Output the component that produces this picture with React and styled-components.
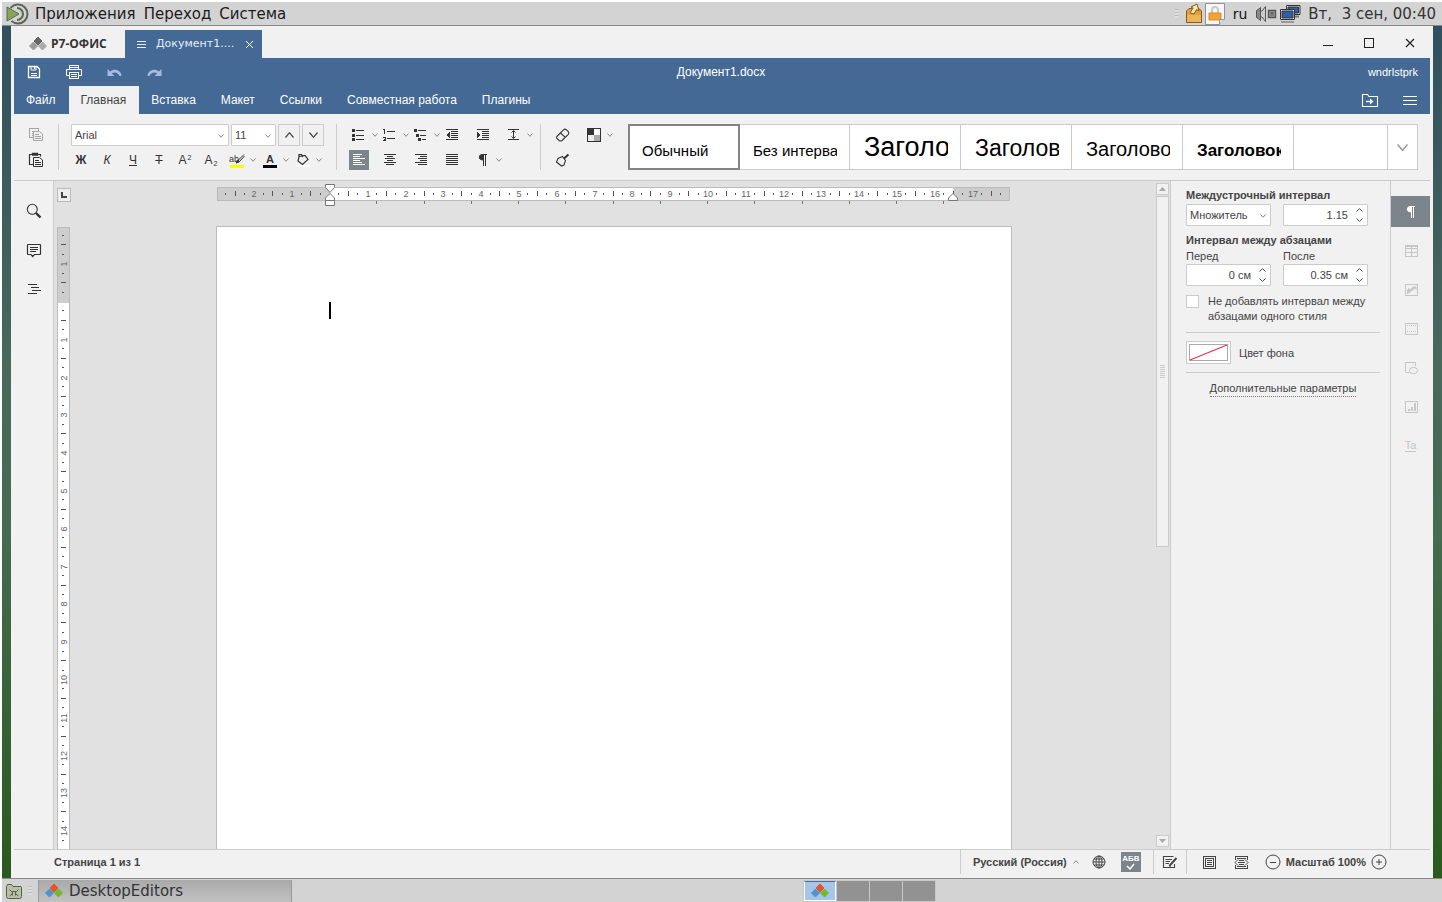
import React from 'react';
import styled, { createGlobalStyle, css } from 'styled-components';

const ui = '"Liberation Sans", Arial, sans-serif';
const desktopFont = '"DejaVu Sans", Verdana, sans-serif';

const GlobalStyle = createGlobalStyle`
  *, *::before, *::after { box-sizing: border-box; }
  body { margin: 0; background: #fff; font-family: ${ui}; font-size: 11px; color: #444; }
  button, input, select { font: inherit; color: inherit; margin: 0; }
  button { border: 0; padding: 0; background: none; }
  svg { display: block; flex: none; }
`;

/* ---------- icons ---------- */

const Svg = ({ w = 20, h = w, children, ...rest }) => (
  <svg width={w} height={h} viewBox={`0 0 ${w} ${h}`} fill="none" stroke="currentColor" aria-hidden="true" {...rest}>
    {children}
  </svg>
);

const crisp = { shapeRendering: 'crispEdges' };

const Chevron = ({ w = 7, h = 4, color = '#888', up, sw = 1 }) => (
  <Svg w={w} h={h} stroke={color} strokeWidth={sw}>
    <path d={up ? `M.5 ${h - 0.5}L${w / 2} .7L${w - 0.5} ${h - 0.5}` : `M.5 .5L${w / 2} ${h - 0.7}L${w - 0.5} .5`} />
  </Svg>
);

const icons = {
  save: (
    <Svg>
      <path d="M4.500 4.500H13L15.500 7V15.500H4.500Z" strokeWidth="1.3" />
      <path d="M7 4.500V8H12V4.500M10.500 5V7" />
      <path d="M7 11.500H13M7 13.500H13" {...crisp} />
    </Svg>
  ),
  print: (
    <Svg>
      <path d="M5.500 8V3.500H14.500V8M5.500 13.500H2.500V7.500H17.500V13.500H14.500" />
      <path d="M5.500 10.500H14.500V16.500H5.500ZM5.500 5.500H14.500M7 12.500H13M7 14.500H13" {...crisp} />
    </Svg>
  ),
  undo: (
    <Svg stroke="none" fill="#a4bbe0">
      <path d="M3.500 7V14H10.500L7.800 11.600C10 9.500 14 10 15.500 14H17.500C17 7.500 10 6 6 9.500Z" />
    </Svg>
  ),
  redo: (
    <Svg stroke="none" fill="#a4bbe0">
      <path d="M17.500 7V14H10.500L13.200 11.600C11 9.500 7 10 5.500 14H3.500C4 7.500 11 6 15 9.500Z" />
    </Svg>
  ),
  copy: (
    <Svg stroke="#a5a5a5">
      <path d="M7 12.500H3.500V3.500H12.500V6.500M5.500 6.500H8M5.500 8.500H7M5.500 10.500H7" {...crisp} />
      <path d="M7.500 6.500H13.500L16.500 9V15.500H7.500ZM9 9.500H13M9 11.500H15M9 13.500H15" />
    </Svg>
  ),
  paste: (
    <Svg>
      <path d="M7 14.500H3.500V4.500H14.500V6.500" strokeWidth="1.2" />
      <path d="M6.500 3.500H11.500V5H6.500Z" strokeWidth="1.400" />
      <path d="M7.500 7.500H13.500L16.500 10V16.500H7.500ZM9 10.500H13M9 12.500H15M9 14.500H15" />
    </Svg>
  ),
  highlight: (
    <Svg>
      <rect x="3" y="15" width="14" height="3" fill="#ffff00" stroke="none" />
      <path d="M17 4.500L11.500 10L9.500 13L12.500 11.500L17.500 6" />
      <path d="M12.500 11.500L10 10.500L9.500 13Z" fill="currentColor" />
    </Svg>
  ),
  fontColor: (
    <Svg {...crisp}><rect x="3" y="15" width="14" height="3" fill="#000" stroke="none" /></Svg>
  ),
  shade: (
    <Svg>
      <rect x="3" y="15" width="14" height="2" fill="#fff" stroke="none" />
      <path d="M6 6.500L12 5.500L15 9.500L9.500 14.500L5 11ZM6 6.500V4.500H8.500L10 7" strokeWidth="1.2" />
    </Svg>
  ),
  bullets: (
    <Svg {...crisp}>
      <path d="M3 4h3v3h-3zM3 8.500h3v3h-3zM3 13h3v3h-3z" fill="currentColor" stroke="none" />
      <path d="M7 5.500H15M7 10.500H15M7 14.500H15" />
    </Svg>
  ),
  numbers: (
    <Svg {...crisp}>
      <path d="M3 4.500H4.500V8.500M3 12.500H5.500V14L3.500 15.500H6" strokeWidth="1" />
      <path d="M7 6.500H15M7 13.500H15" />
    </Svg>
  ),
  multilevel: (
    <Svg {...crisp}>
      <path d="M3 4h3v3h-3zM5 8.500h3v3h-3zM7 13h3v3h-3z" fill="currentColor" stroke="none" />
      <path d="M7 5.500H15M9 10.500H15M11 14.500H15" />
    </Svg>
  ),
  outdent: (
    <Svg {...crisp}>
      <path d="M4 4.500H16M9 6.500H16M9 8.500H16M9 10.500H16M9 12.500H16M4 14.500H16" />
      <path d="M8 7V13L4 10Z" fill="currentColor" stroke="none" />
    </Svg>
  ),
  indent: (
    <Svg {...crisp}>
      <path d="M4 4.500H16M9 6.500H16M9 8.500H16M9 10.500H16M9 12.500H16M4 14.500H16" />
      <path d="M4 7V13L8 10Z" fill="currentColor" stroke="none" />
    </Svg>
  ),
  spacing: (
    <Svg>
      <path d="M4 4.500H15M4 14.500H15" {...crisp} />
      <path d="M9.500 6V13M7.500 7.500L9.500 5.500L11.500 7.500M7.500 11.500L9.500 13.500L11.500 11.500" />
    </Svg>
  ),
  left: <Svg {...crisp}><path d="M4 4.500H13M4 6.500H11M4 8.500H16M4 10.500H11M4 12.500H13M4 14.500H16" /></Svg>,
  center: <Svg {...crisp}><path d="M4 4.500H16M7 6.500H13M5 8.500H15M7 10.500H13M4 12.500H16M6 14.500H14" /></Svg>,
  right: <Svg {...crisp}><path d="M4 4.500H16M9 6.500H16M7 8.500H16M9 10.500H16M4 12.500H16M7 14.500H16" /></Svg>,
  justify: <Svg {...crisp}><path d="M4 4.500H16M4 6.500H16M4 8.500H16M4 10.500H16M4 12.500H16M4 14.500H16" /></Svg>,
  pilcrow: (
    <Svg>
      <path d="M10.500 5V15.500M12.500 5V15.500M8.500 4.500H14" {...crisp} />
      <path d="M10.500 4.500H8.500A2.700 2.700 0 0 0 8.500 9.800H10.500Z" fill="currentColor" />
    </Svg>
  ),
  eraser: (
    <Svg>
      <path d="M3.800 11.500L10.500 4.800Q12 3.500 13.500 4.800L15.300 6.500Q16.500 8 15.300 9.300L9 15.500Q7.500 16.500 6.200 15.500L4 13.500Q3 12.500 3.800 11.500ZM7.500 8L12.300 12.300" strokeWidth="1.100" />
    </Svg>
  ),
  scheme: (
    <Svg {...crisp}>
      <path d="M4 4h6v6h-6z" fill="#333" stroke="none" />
      <path d="M10 4h6v6h-6z" fill="#fff" stroke="none" />
      <path d="M4 10h6v6h-6z" fill="#ececec" stroke="none" />
      <path d="M10 10h6v6h-6z" fill="#aaa" stroke="none" />
      <path d="M3.500 3.500H16.500V16.500H3.500Z" />
    </Svg>
  ),
  brush: (
    <Svg>
      <path d="M9.500 6.500L5 8.500L3.500 12L8.500 16L11 15L12.500 10.500Z" strokeWidth="1.100" />
      <path d="M15.500 4.500L11 8.500" strokeWidth="2" />
    </Svg>
  ),
  search: (
    <Svg>
      <circle cx="8.300" cy="8.300" r="5" strokeWidth="1.100" />
      <path d="M12 12L16.500 16.500" strokeWidth="2.400" />
    </Svg>
  ),
  comment: (
    <Svg>
      <path d="M4 4.500H16Q16.500 4.500 16.500 5V14Q16.500 14.500 16 14.500H10.500L8.700 16.500L7 14.500H4Q3.500 14.500 3.500 14V5Q3.500 4.500 4 4.500Z" strokeWidth="1.200" />
      <path d="M6 7.500H14M6 9.500H14M6 11.500H12" {...crisp} />
    </Svg>
  ),
  outline: <Svg {...crisp}><path d="M4 5.500H13M7 8.500H15M8 11.500H17M4 14.500H13" /></Svg>,
  folder: (
    <Svg>
      <path d="M2.500 4.500H7.500L9 6.500H17.500V16.500H2.500Z" strokeWidth="1.100" />
      <path d="M6 11.500H11" strokeWidth="1.500" />
      <path d="M10 8.500L13.500 11.500L10 14.500Z" fill="currentColor" stroke="none" />
    </Svg>
  ),
  menu: <Svg {...crisp}><path d="M3 6.500H17M3 10.500H17M3 14.500H17" /></Svg>,
  table: (
    <Svg {...crisp}><path d="M4.500 4.500H16.500V15.500H4.500ZM4.500 7.500H16.500M4.500 11.500H16.500M10.500 4.500V15.500M5 5.500H16" /></Svg>
  ),
  image: (
    <Svg>
      <path d="M4.500 4.500H16.500V15.500H4.500Z" {...crisp} />
      <path d="M6 14.500V10L8 8L9.500 9.500L12 6.500H15.500V10L14 8.500Z" fill="currentColor" stroke="none" />
    </Svg>
  ),
  headerFooter: (
    <Svg {...crisp}>
      <path d="M4.500 4.500H16.500V15.500H4.500Z" />
      <path d="M6 6.500H16M6 12.500H16" strokeDasharray="1 1" />
    </Svg>
  ),
  shape: (
    <Svg>
      <path d="M8 14.500H4.500V4.500H14.500V8" />
      <ellipse cx="12.500" cy="12.500" rx="4" ry="3.200" />
    </Svg>
  ),
  chart: (
    <Svg {...crisp}>
      <path d="M4.500 4.500H16.500V15.500H4.500Z" />
      <path d="M7 12h2v2h-2zM10 10h2v4h-2zM13 6h2v8h-2z" fill="currentColor" stroke="none" />
    </Svg>
  ),
  globe: (
    <Svg>
      <circle cx="10" cy="10" r="6" />
      <ellipse cx="10" cy="10" rx="3" ry="6" />
      <path d="M10 4V16M4 10H16M5 7H15M5 13H15" />
    </Svg>
  ),
  track: (
    <Svg>
      <path d="M13.500 4.500H3.500V15.500H14.500V12M5.500 7.500H12M5.500 9.500H10M5.500 11.500H9" strokeWidth="1.100" />
      <path d="M16.500 6L10.500 12.500L9.500 14.500" strokeWidth="2" />
    </Svg>
  ),
  fitPage: (
    <Svg {...crisp}><path d="M4.500 4.500H16.500V16.500H4.500ZM6.500 6.500H14.500V14.500H6.500ZM8 8.500H13M8 10.500H13M8 12.500H13" /></Svg>
  ),
  fitWidth: (
    <Svg>
      <path d="M4.500 8V4.500H16.500V8M4.500 13V16.500H16.500V13M6.500 7V6.500H14.500V7M6.500 14V14.500H14.500V14M8 8.500H13M7 10.500H14M8 12.500H13" {...crisp} />
      <path d="M7 7.500L4 10.500L7 13.500M14 7.500L17 10.500L14 13.500" />
    </Svg>
  ),
  minus: <Svg><circle cx="10" cy="10" r="7" /><path d="M7 10.500H13" {...crisp} /></Svg>,
  plus: <Svg><circle cx="10" cy="10" r="7" /><path d="M7 10H13M10 7V13" /></Svg>,
};

const ThreeDiamonds = ({ colors }) => (
  <Svg w={18} h={14} stroke="none">
    <path d="M9 0L13 4L9 8L5 4Z" fill={colors[0]} stroke={colors[0]} strokeLinejoin="round" />
    <path d="M4.500 5L8.500 9L4.500 13L.500 9Z" fill={colors[1]} stroke={colors[1]} strokeLinejoin="round" />
    <path d="M13.500 5L17.500 9L13.500 13L9.500 9Z" fill={colors[2]} stroke={colors[2]} strokeLinejoin="round" />
  </Svg>
);
const brand = ['#e2562b', '#4d93cf', '#73ba2a'];

/* ---------- desktop ---------- */

const Desktop = styled.div`
  height: 100vh;
  min-height: 500px;
  display: flex;
  flex-direction: column;
  padding: 2px 0 0 2px;
`;

const Panel = styled.header`
  flex: none;
  height: 24px;
  display: flex;
  align-items: center;
  background: #d3d3d3;
  font: 15px/20px ${desktopFont};
  color: #1c1c1c;
  border-bottom: ${p => (p.$bottom ? 0 : '1px solid #888')};
  border-top: ${p => (p.$bottom ? '1px solid #888' : 0)};
  padding: 0 4px;
`;

const PanelMenu = styled.nav`
  display: flex;
  gap: 8px;
  margin-left: 6px;
  flex: 1;
`;
const PanelItem = styled.button`
  line-height: 20px;
`;
const Tray = styled.div`
  display: flex;
  align-items: center;
  gap: 2px;
`;
const Lang = styled.span`
  font-size: 14px;
  margin: 0 6px;
  color: #111;
`;
const Clock = styled.time`
  color: #333;
  margin-left: 5px;
  padding-right: 2px;
  white-space: pre;
`;
const Grip = styled.span`
  width: 4px;
  height: 9px;
  margin: 0 ${p => (p.$wide ? 6 : 4)}px;
  background: repeating-linear-gradient(#bbb 0 1px, #ddd 1px 3px);
`;
const TaskButton = styled.button`
  display: flex;
  align-items: center;
  gap: 6px;
  width: 254px;
  height: 22px;
  padding: 0 6px;
  background: linear-gradient(#a9a9a9, #c2c2c2);
  border-right: 1px solid #999;
  border-left: 1px solid #999;
  color: #333;
`;
const Workspaces = styled.div`
  display: flex;
  gap: 1px;
  margin-left: 511px;
  padding: 1px;
  background: #c8c8c8;
`;
const Workspace = styled.button`
  width: 32px;
  height: 20px;
  display: flex;
  align-items: center;
  justify-content: center;
  background: ${p => (p.$on ? '#a6c5ea' : '#929292')};
  border: ${p => (p.$on ? '1px solid #fff' : 0)};
  border-top-color: #4a6d95;
`;

const Wallpaper = styled.div`
  flex: 1;
  min-height: 0;
  padding: 0 9px;
  background: linear-gradient(#31505f, #48695c 40%, #456b50 60%, #2a5a1e);
  display: flex;
`;

/* ---------- window ---------- */

const Window = styled.main`
  flex: 1;
  min-width: 0;
  display: flex;
  flex-direction: column;
  background: #f1f1f1;
  padding: 0 3px;
`;
const TitleBar = styled.div`
  flex: none;
  height: 32px;
  display: flex;
  align-items: flex-end;
`;
const Logo = styled.div`
  width: 111px;
  height: 28px;
  padding-left: 15px;
  display: flex;
  align-items: center;
  gap: 4px;
  font: bold 12px/28px "Open Sans", sans-serif;
  color: #333;
`;
const DocTab = styled.div`
  width: 137px;
  height: 28px;
  padding: 0 8px 0 12px;
  display: flex;
  align-items: center;
  background: #446995;
  color: #e4edf8;
  font: 11px/28px ${desktopFont};
`;
const DocName = styled.span`
  flex: 1;
  margin-left: 10px;
`;
const WindowControls = styled.div`
  flex: 1;
  height: 28px;
  display: flex;
  justify-content: flex-end;
  align-items: center;
  gap: 25px;
  padding-right: 12px;
  color: #222;
`;

const Header = styled.div`
  flex: none;
  background: #446995;
  color: #fff;
`;
const QuickRow = styled.div`
  height: 28px;
  display: grid;
  grid-template-columns: 1fr auto 1fr;
  align-items: center;
  padding: 0 12px 0 10px;
  font-size: 12px;
`;
const QuickButtons = styled.div`
  display: flex;
  gap: 20px;
`;
const UserName = styled.span`
  justify-self: end;
  font-size: 11px;
`;
const TabRow = styled.div`
  height: 28px;
  display: flex;
  align-items: center;
`;
const Tab = styled.button`
  height: 28px;
  padding: 0 13px 0 12px;
  font-size: 12px;
  color: ${p => (p.$on ? '#444' : '#fff')};
  background: ${p => (p.$on ? '#f1f1f1' : 'transparent')};
`;
const TabTools = styled.div`
  margin-left: auto;
  display: flex;
  gap: 20px;
  padding-right: 10px;
`;

/* ---------- toolbar ---------- */

const Toolbar = styled.div`
  flex: none;
  height: 67px;
  display: flex;
  padding: 10px 12px 0;
  border-bottom: 1px solid #cbcbcb;
`;
const Group = styled.div`
  display: flex;
  flex-direction: column;
  gap: 4px;
`;
const Row = styled.div`
  height: ${p => (p.$tall ? 22 : 20)}px;
  display: flex;
  align-items: center;
  gap: ${p => p.$gap || 0}px;
`;
const Separator = styled.div`
  width: 1px;
  height: 46px;
  margin: 0 ${p => p.$right || 12}px 0 ${p => p.$left || 12}px;
  background: #cbcbcb;
`;
const Slot = styled.div`
  width: 31px;
  display: flex;
  align-items: center;
`;
const Tool = styled.button`
  position: relative;
  width: 20px;
  height: 20px;
  flex: none;
  display: flex;
  align-items: center;
  justify-content: center;
  font: 12px/20px ${ui};
  color: ${p => (p.$on ? '#fff' : '#333')};
  background: ${p => (p.$on ? '#7d858c' : 'transparent')};
  ${p => p.$bold && css`font-weight: bold;`}
  ${p => p.$italic && css`font-style: italic;`}
  ${p => p.$deco && css`text-decoration: ${p.$deco};`}
`;
const Script = styled.span`
  font-size: 7px;
  line-height: 7px;
  align-self: ${p => (p.$low ? 'flex-end' : 'flex-start')};
  padding: 4px 0 3px 1px;
`;
const Overlay = styled.span`
  position: absolute;
  left: 0;
  right: ${p => (p.$shift ? 6 : 0)}px;
  top: 2px;
  text-align: center;
  font: ${p => (p.$shift ? 9 : 11)}px/14px ${ui};
  font-weight: ${p => (p.$shift ? 'normal' : 'bold')};
`;
const DropArrow = styled.button`
  width: 12px;
  height: 20px;
  flex: none;
  display: flex;
  align-items: center;
  justify-content: center;
`;
const Field = styled.div`
  position: relative;
  width: ${p => p.$w}px;
  height: 22px;
  display: flex;
  align-items: center;
  border: 1px solid #cbcbcb;
  border-radius: 1px;
  background: #fff;
  > svg { position: absolute; right: 4px; top: 9px; pointer-events: none; }
`;
const Select = styled.select`
  appearance: none;
  border: 0;
  outline: 0;
  background: none;
  width: 100%;
  height: 20px;
  padding: 0 3px;
`;
const BoxButton = styled.button`
  width: 22px;
  height: 22px;
  border: 1px solid #cbcbcb;
  display: flex;
  align-items: center;
  justify-content: center;
`;
const Gallery = styled.div`
  flex: 1;
  min-width: 0;
  height: 46px;
  margin-left: 13px;
  display: flex;
  background: #fff;
  border: 1px solid #cbcbcb;
`;
const GalleryItem = styled.button`
  width: ${p => (p.$on ? 110 : 111)}px;
  height: 44px;
  flex: none;
  padding: ${p => p.$top}px 12px 0 ${p => (p.$on ? 13 : 14)}px;
  display: flex;
  align-items: flex-start;
  text-align: left;
  color: #000;
  font-size: ${p => p.$size}px;
  font-weight: ${p => (p.$bold ? 'bold' : 'normal')};
  border-right: 1px solid #cbcbcb;
  ${p => p.$on && css`
    outline: 2px solid #848484;
    outline-offset: -1px;
    border-color: transparent;
  `}
`;
const Clip = styled.span`
  flex: 1;
  min-width: 0;
  overflow: hidden;
  white-space: nowrap;
  line-height: 30px;
`;
const GalleryMore = styled.button`
  width: 30px;
  margin-left: auto;
  border-left: 1px solid #cbcbcb;
  display: flex;
  align-items: center;
  justify-content: center;
`;

/* ---------- body ---------- */

const Body = styled.div`
  flex: 1;
  min-height: 0;
  display: flex;
`;
const SideBar = styled.div`
  width: 40px;
  flex: none;
  display: flex;
  flex-direction: column;
  align-items: center;
  gap: 19px;
  padding-top: 20px;
  border-right: 1px solid #cbcbcb;
  color: #333;
`;
const Canvas = styled.div`
  flex: 1;
  min-width: 0;
  display: flex;
  background: #e1e1e1;
  overflow: hidden;
`;
const VRulerColumn = styled.div`
  width: 17px;
  flex: none;
  padding: 7px 0 0 3px;
  display: flex;
  flex-direction: column;
  gap: 25px;
  overflow: hidden;
`;
const TabStop = styled.button`
  width: 14px;
  height: 14px;
  flex: none;
  border: 1px solid #bbb;
  background: #ececec;
  display: flex;
  align-items: center;
  justify-content: center;
`;
const Document = styled.div`
  flex: 1;
  min-width: 0;
  display: flex;
  flex-direction: column;
  align-items: center;
  overflow: hidden;
`;
const HRulerRow = styled.div`
  height: 45px;
  flex: none;
`;
const Page = styled.div`
  width: 796px;
  flex: 1;
  background: #fff;
  border: 1px solid #bbb;
  border-bottom: 0;
  padding: 75px 112px;
`;
const Caret = styled.div`
  width: 2px;
  height: 17px;
  background: #000;
`;
const ScrollBar = styled.div`
  width: 14px;
  flex: none;
  padding: 2px 1px 2px 0;
  display: flex;
  flex-direction: column;
`;
const ScrollButton = styled.button`
  width: 13px;
  height: 12px;
  flex: none;
  border: 1px solid #cbcbcb;
  background: #f1f1f1;
  display: flex;
  align-items: center;
  justify-content: center;
`;
const ScrollTrack = styled.div`
  flex: 1;
  padding-top: 1px;
`;
const ScrollThumb = styled.div`
  height: 55%;
  border: 1px solid #cbcbcb;
  background: #f1f1f1;
  display: flex;
  align-items: center;
  justify-content: center;
  &::before {
    content: '';
    width: 5px;
    height: 13px;
    background: repeating-linear-gradient(#cbcbcb 0 1px, transparent 1px 2px);
  }
`;

const Settings = styled.form`
  width: 220px;
  flex: none;
  padding: 8px 10px 0 15px;
  border-left: 1px solid #cbcbcb;
`;
const Title = styled.div`
  font-weight: bold;
  line-height: 13px;
  margin-bottom: ${p => p.$gap || 0}px;
`;
const Pair = styled.div`
  display: grid;
  grid-template-columns: 85px 85px;
  column-gap: 12px;
  margin-bottom: 8px;
`;
const Label = styled.label`
  display: block;
  line-height: 13px;
  margin-bottom: 1px;
`;
const NumberInput = styled.input`
  border: 0;
  outline: 0;
  background: none;
  width: 100%;
  height: 20px;
  padding: 0 19px 0 0;
  text-align: right;
`;
const Spinner = styled.span`
  position: absolute;
  right: 4px;
  top: 2px;
  height: 16px;
  display: flex;
  flex-direction: column;
  justify-content: space-between;
  button { height: 6px; display: flex; align-items: center; }
`;
const CheckLabel = styled.label`
  display: flex;
  gap: 9px;
  line-height: 15px;
`;
const CheckBox = styled.input`
  appearance: none;
  width: 13px;
  height: 13px;
  flex: none;
  margin: 1px 0 0;
  border: 1px solid #cbcbcb;
  background: #fff;
`;
const Rule = styled.hr`
  border: 0;
  height: 1px;
  background: #cbcbcb;
  margin: 8px 0;
`;
const ColorRow = styled.div`
  display: flex;
  align-items: center;
  gap: 8px;
`;
const Swatch = styled.button`
  width: 45px;
  height: 23px;
  padding: 2px;
  border: 1px solid #cbcbcb;
  background: #fff;
`;
const Advanced = styled.div`
  text-align: center;
  a {
    color: inherit;
    text-decoration: none;
    line-height: 15px;
    display: inline-block;
    border-bottom: 1px dotted #777;
  }
`;
const RightTabs = styled.div`
  width: 40px;
  flex: none;
  padding-top: 15px;
  border-left: 1px solid #cbcbcb;
  display: flex;
  flex-direction: column;
  gap: 8px;
`;
const RightTab = styled.button`
  height: 31px;
  display: flex;
  align-items: center;
  justify-content: center;
  font-size: 11px;
  color: ${p => (p.$on ? '#fff' : '#c6c6c6')};
  background: ${p => (p.$on ? '#7d858c' : 'transparent')};
`;
const TextArt = styled.span`
  border-bottom: 1px solid #c6c6c6;
  line-height: 12px;
`;

const StatusBar = styled.footer`
  flex: none;
  height: 29px;
  border-top: 1px solid #cbcbcb;
  display: flex;
  align-items: center;
  padding: 0 41px 4px 40px;
  font-weight: bold;
`;
const PageCount = styled.span`
  flex: 1;
`;
const StatusSep = styled.span`
  width: 1px;
  height: 24px;
  background: #cbcbcb;
`;
const StatusGroup = styled.div`
  display: flex;
  align-items: center;
  gap: ${p => p.$gap || 0}px;
  padding: 0 ${p => p.$x}px;
`;
const LangButton = styled.button`
  display: flex;
  align-items: center;
  gap: 6px;
  font-weight: bold;
`;
const Spell = styled.button`
  width: 20px;
  height: 20px;
  background: #7d858c;
  color: #fff;
  font: bold 8px/9px ${ui};
  display: flex;
  flex-direction: column;
  align-items: center;
  padding-top: 2px;
`;

/* ---------- rulers ---------- */

const CM = 37.8;

const HRuler = () => {
  const zero = 113;
  const marks = [];
  for (let q = -11; q <= 71; q++) {
    const x = Math.round(zero + (q * CM) / 4);
    if (q === 0 || x > 788) continue;
    if (q % 4 === 0) {
      marks.push(<text key={q} x={x} y="16" textAnchor="middle" fontSize="9" fill="#666" stroke="none">{Math.abs(q / 4)}</text>);
    } else if (q % 2 === 0) marks.push(<path key={q} d={`M${x - 1}.5 10V15`} stroke="#555" />);
    else marks.push(<path key={q} d={`M${x - 1}.5 12V14`} stroke="#555" />);
  }
  const stops = Array.from({ length: 13 }, (_, i) => Math.round(zero + (i + 1) * CM * 1.25));
  return (
    <Svg w={794} h={30}>
      <rect x="0.5" y="6.500" width="792" height="13" fill="#cdcdcd" stroke="#bbb" {...crisp} />
      <rect x="113" y="7" width="623" height="12" fill="#fff" stroke="none" />
      <g {...crisp}>{marks}</g>
      <g {...crisp} stroke="#777">{stops.map(x => <path key={x} d={`M${x - 1}.5 20V23`} />)}</g>
      <g fill="#fff" stroke="#777">
        <path d="M108.500 3.500H117.500V6.500L113 11.500L108.500 6.500Z" />
        <path d="M113 12.500L117.500 17V19.500H108.500V17ZM108.500 19.500H117.500V24.500H108.500Z" />
        <path d="M736 12.500L740.500 17V19.500H731.500V17Z" />
      </g>
    </Svg>
  );
};

const VRuler = () => {
  const zero = 75;
  const marks = [];
  for (let q = -7; q <= 100; q++) {
    const y = Math.round(zero + (q * CM) / 4) - 1;
    if (q === 0) continue;
    if (q % 4 === 0) {
      marks.push(<text key={q} transform={`translate(10 ${y + 1}) rotate(-90)`} textAnchor="middle" fontSize="9" fill="#666" stroke="none">{Math.abs(q / 4)}</text>);
    } else if (q % 2 === 0) marks.push(<path key={q} d={`M4 ${y}.5H9`} stroke="#555" />);
    else marks.push(<path key={q} d={`M5 ${y}.5H7`} stroke="#555" />);
  }
  return (
    <Svg w={13} h={1024}>
      <rect x="0.5" y="0.5" width="12" height="1030" fill="#fff" stroke="#bbb" {...crisp} />
      <rect x="1" y="1" width="11" height="75" fill="#cdcdcd" stroke="none" />
      <g {...crisp}>{marks}</g>
    </Svg>
  );
};

/* ---------- parts ---------- */

const SplitTool = ({ icon, label, children, arrow = true }) => (
  <Slot>
    <Tool type="button" aria-label={label}>{icons[icon]}{children}</Tool>
    {arrow && <DropArrow type="button" aria-label={`${label}: параметры`}><Chevron w={6} /></DropArrow>}
  </Slot>
);

const NumberField = ({ id, value, label }) => (
  <Field $w={85}>
    <NumberInput id={id} type="text" defaultValue={value} aria-label={label} />
    <Spinner>
      <button type="button" aria-label="Больше"><Chevron up color="#444" /></button>
      <button type="button" aria-label="Меньше"><Chevron color="#444" /></button>
    </Spinner>
  </Field>
);

const styles = [
  { name: 'Обычный', size: 15, top: 11, on: true },
  { name: 'Без интервала', size: 15, top: 11 },
  { name: 'Заголовок 1', size: 27, top: 7 },
  { name: 'Заголовок 2', size: 23, top: 8 },
  { name: 'Заголовок 3', size: 20, top: 9 },
  { name: 'Заголовок 4', size: 17, top: 11, bold: true },
];

const tabs = ['Файл', 'Главная', 'Вставка', 'Макет', 'Ссылки', 'Совместная работа', 'Плагины'];

export default function App() {
  return (
    <Desktop>
      <GlobalStyle />
      <Panel>
        <Svg w={23} h={22} stroke="none">
          <circle cx="12" cy="11" r="9.500" stroke="#5a6650" strokeWidth="2" strokeDasharray="46 14" strokeDashoffset="-36" />
          <path d="M11 5A6 6 0 1 1 11 17" stroke="#5a6650" strokeWidth="2" />
          <path d="M1 4L13 11L1 18Z" fill="#87a556" stroke="#5a6650" />
        </Svg>
        <PanelMenu>
          <PanelItem>Приложения</PanelItem>
          <PanelItem>Переход</PanelItem>
          <PanelItem>Система</PanelItem>
        </PanelMenu>
        <Tray>
          <Grip />
          <Svg w={18} h={22} stroke="#8a5a12">
            <path d="M1.500 8L4 5.500H14L16.500 8V19.500H1.500Z" fill="#e0a040" />
            <path d="M2 12H16V19H2Z" fill="#eeb45a" stroke="none" />
            <path d="M5 10L8 5L6 4L12 1L14 8L11.500 6.500L9 11Z" fill="#f6e7b0" />
          </Svg>
          <Svg w={20} h={22} stroke="#8a93a8">
            <path d="M.500 .500H19.500V16L14.500 21.500H.500Z" fill="#f6f6f6" />
            <path d="M7 10V7A3 3 0 0 1 13 7V10" stroke="#c9c9c9" strokeWidth="2" />
            <path d="M4 10H16V17H4Z" fill="#f0a438" stroke="#dd8b1c" />
            <path d="M14.500 21.500V16.500H19.500" fill="#ddd" />
          </Svg>
          <Lang>ru</Lang>
          <Svg w={22} h={20} stroke="#555">
            <path d="M1.500 6.500Q4 5 5.500 3.500V16.500Q4 15 1.500 13.500Z" fill="#888" />
            <path d="M5.500 7H7L10.500 2.500V17.500L7 13H5.500Z" fill="#ccc" />
            <path d="M13.500 6.500H20.500V13.500H13.500ZM15.500 8.500L18.500 11.500M18.500 8.500L15.500 11.500" fill="#999" strokeWidth="1.400" />
          </Svg>
          <Svg w={22} h={20} stroke="#333">
            <path d="M7.500 1.500H21V10.500H7.500Z" fill="#e8e8e8" />
            <path d="M9 3H19.500V9H9Z" fill="#2b5da8" />
            <path d="M13 12.500H20" stroke="#777" strokeWidth="2" />
            <path d="M1.500 5.500H15.500V15.500H1.500Z" fill="#e8e8e8" />
            <path d="M3 7H14V14H3Z" fill="#2b5da8" />
            <path d="M2 18H15" stroke="#999" strokeWidth="2" />
          </Svg>
          <Clock>Вт,  3 сен, 00:40</Clock>
        </Tray>
      </Panel>

      <Wallpaper>
        <Window>
          <TitleBar>
            <Logo>
              <ThreeDiamonds colors={['#666', '#999', '#aaa']} />
              Р7-ОФИС
            </Logo>
            <DocTab>
              <Svg w={9} h={9} {...crisp}><path d="M0 1.500H9M0 4.500H9M0 7.500H9" /></Svg>
              <DocName>Документ1....</DocName>
              <button type="button" aria-label="Закрыть вкладку">
                <Svg w={9} stroke="#fff"><path d="M1 1L8 8M8 1L1 8" /></Svg>
              </button>
            </DocTab>
            <WindowControls>
              <button type="button" aria-label="Свернуть"><Svg w={16} {...crisp}><path d="M3 9.500H13" /></Svg></button>
              <button type="button" aria-label="Развернуть"><Svg w={16} {...crisp}><path d="M3.500 2.500H12.500V11.500H3.500Z" /></Svg></button>
              <button type="button" aria-label="Закрыть"><Svg w={16}><path d="M4 3L12 11M12 3L4 11" strokeWidth="1.200" /></Svg></button>
            </WindowControls>
          </TitleBar>

          <Header>
            <QuickRow>
              <QuickButtons>
                <button type="button" aria-label="Сохранить">{icons.save}</button>
                <button type="button" aria-label="Печать">{icons.print}</button>
                <button type="button" aria-label="Отменить">{icons.undo}</button>
                <button type="button" aria-label="Повторить">{icons.redo}</button>
              </QuickButtons>
              <span>Документ1.docx</span>
              <UserName>wndrlstprk</UserName>
            </QuickRow>
            <TabRow>
              {tabs.map((t, i) => <Tab key={t} type="button" $on={i === 1}>{t}</Tab>)}
              <TabTools>
                <button type="button" aria-label="Открыть расположение">{icons.folder}</button>
                <button type="button" aria-label="Меню">{icons.menu}</button>
              </TabTools>
            </TabRow>
          </Header>

          <Toolbar>
            <Group>
              <Row $tall><Tool type="button" aria-label="Копировать">{icons.copy}</Tool></Row>
              <Row><Tool type="button" aria-label="Вставить">{icons.paste}</Tool></Row>
            </Group>
            <Separator />
            <Group>
              <Row $tall $gap={2}>
                <Field $w={158}>
                  <Select aria-label="Шрифт" defaultValue="Arial"><option>Arial</option></Select>
                  <Chevron w={6} />
                </Field>
                <Field $w={45}>
                  <Select aria-label="Размер шрифта" defaultValue="11"><option>11</option></Select>
                  <Chevron w={6} />
                </Field>
                <BoxButton type="button" aria-label="Увеличить размер"><Chevron up w={9} h={6} color="#444" sw={1.2} /></BoxButton>
                <BoxButton type="button" aria-label="Уменьшить размер"><Chevron w={9} h={6} color="#444" sw={1.2} /></BoxButton>
              </Row>
              <Row $gap={6}>
                <Tool type="button" $bold>Ж</Tool>
                <Tool type="button" $italic>К</Tool>
                <Tool type="button" $deco="underline">Ч</Tool>
                <Tool type="button" $deco="line-through">Т</Tool>
                <Tool type="button">A<Script>2</Script></Tool>
                <Tool type="button">A<Script $low>2</Script></Tool>
                <Row $gap={2}>
                  <SplitTool icon="highlight" label="Цвет выделения"><Overlay $shift>ab</Overlay></SplitTool>
                  <SplitTool icon="fontColor" label="Цвет шрифта"><Overlay>A</Overlay></SplitTool>
                  <SplitTool icon="shade" label="Заливка абзаца" />
                </Row>
              </Row>
            </Group>
            <Separator />
            <Group>
              <Row $tall>
                <SplitTool icon="bullets" label="Маркеры" />
                <SplitTool icon="numbers" label="Нумерация" />
                <SplitTool icon="multilevel" label="Многоуровневый список" />
                <SplitTool icon="outdent" label="Уменьшить отступ" arrow={false} />
                <SplitTool icon="indent" label="Увеличить отступ" arrow={false} />
                <SplitTool icon="spacing" label="Междустрочный интервал" />
              </Row>
              <Row>
                <Slot><Tool type="button" $on aria-label="По левому краю">{icons.left}</Tool></Slot>
                <SplitTool icon="center" label="По центру" arrow={false} />
                <SplitTool icon="right" label="По правому краю" arrow={false} />
                <SplitTool icon="justify" label="По ширине" arrow={false} />
                <SplitTool icon="pilcrow" label="Непечатаемые символы" />
              </Row>
            </Group>
            <Separator $left={5} />
            <Group>
              <Row $tall>
                <SplitTool icon="eraser" label="Очистить стиль" arrow={false} />
                <SplitTool icon="scheme" label="Цветовая схема" />
              </Row>
              <Row><SplitTool icon="brush" label="Копировать стиль" arrow={false} /></Row>
            </Group>
            <Gallery>
              {styles.map(s => (
                <GalleryItem key={s.name} type="button" $size={s.size} $top={s.top} $bold={s.bold} $on={s.on}>
                  <Clip>{s.name}</Clip>
                </GalleryItem>
              ))}
              <GalleryMore type="button" aria-label="Все стили"><Chevron w={11} h={7} color="#999" sw={1.5} /></GalleryMore>
            </Gallery>
          </Toolbar>

          <Body>
            <SideBar>
              <button type="button" aria-label="Поиск">{icons.search}</button>
              <button type="button" aria-label="Комментарии">{icons.comment}</button>
              <button type="button" aria-label="Навигация">{icons.outline}</button>
            </SideBar>
            <Canvas>
              <VRulerColumn>
                <TabStop type="button" aria-label="Табуляция">
                  <Svg w={6} {...crisp} strokeWidth="2"><path d="M1 0V5H6" /></Svg>
                </TabStop>
                <VRuler />
              </VRulerColumn>
              <Document>
                <HRulerRow><HRuler /></HRulerRow>
                <Page><Caret /></Page>
              </Document>
              <ScrollBar>
                <ScrollButton type="button" aria-label="Вверх"><Svg w={7} h={4} stroke="none"><path d="M0 4L3.500 0L7 4Z" fill="#aaa" /></Svg></ScrollButton>
                <ScrollTrack><ScrollThumb /></ScrollTrack>
                <ScrollButton type="button" aria-label="Вниз"><Svg w={7} h={4} stroke="none"><path d="M0 0L3.500 4L7 0Z" fill="#aaa" /></Svg></ScrollButton>
              </ScrollBar>
            </Canvas>
            <Settings>
              <Title $gap={2}>Междустрочный интервал</Title>
              <Pair>
                <Field $w={85}>
                  <Select aria-label="Тип интервала" defaultValue="Множитель"><option>Множитель</option></Select>
                  <Chevron w={6} />
                </Field>
                <NumberField id="line" value="1.15" label="Значение интервала" />
              </Pair>
              <Title $gap={3}>Интервал между абзацами</Title>
              <Pair>
                <Label htmlFor="before">Перед</Label>
                <Label htmlFor="after">После</Label>
                <NumberField id="before" value="0 см" />
                <NumberField id="after" value="0.35 см" />
              </Pair>
              <CheckLabel>
                <CheckBox type="checkbox" />
                <span>Не добавлять интервал между абзацами одного стиля</span>
              </CheckLabel>
              <Rule />
              <ColorRow>
                <Swatch type="button" id="fill" aria-label="Цвет фона">
                  <Svg w={39} h={17}>
                    <path d="M.500 .500H38.500V16.500H.500Z" stroke="#aaa" {...crisp} />
                    <path d="M1 16L38 1" stroke="#e0334f" strokeWidth="1.200" />
                  </Svg>
                </Swatch>
                <label htmlFor="fill">Цвет фона</label>
              </ColorRow>
              <Rule />
              <Advanced><a href="#advanced">Дополнительные параметры</a></Advanced>
            </Settings>
            <RightTabs>
              <RightTab type="button" $on aria-label="Параметры абзаца">{icons.pilcrow}</RightTab>
              <RightTab type="button" aria-label="Параметры таблицы">{icons.table}</RightTab>
              <RightTab type="button" aria-label="Параметры изображения">{icons.image}</RightTab>
              <RightTab type="button" aria-label="Параметры колонтитулов">{icons.headerFooter}</RightTab>
              <RightTab type="button" aria-label="Параметры фигуры">{icons.shape}</RightTab>
              <RightTab type="button" aria-label="Параметры диаграммы">{icons.chart}</RightTab>
              <RightTab type="button"><TextArt>Ta</TextArt></RightTab>
            </RightTabs>
          </Body>

          <StatusBar>
            <PageCount>Страница 1 из 1</PageCount>
            <StatusSep />
            <StatusGroup $gap={10} $x={12}>
              <LangButton type="button">Русский (Россия)<Chevron up w={6} /></LangButton>
              <StatusGroup $gap={12} $x={0}>
                <button type="button" aria-label="Язык документа">{icons.globe}</button>
                <Spell type="button" aria-label="Проверка орфографии">
                  АБВ
                  <Svg w={9} h={7} strokeWidth="1.500"><path d="M1 3L4 6L8 1" /></Svg>
                </Spell>
              </StatusGroup>
            </StatusGroup>
            <StatusSep />
            <StatusGroup $x={6}>
              <button type="button" aria-label="Отслеживание изменений">{icons.track}</button>
            </StatusGroup>
            <StatusSep />
            <StatusGroup $gap={12} $x={12}>
              <button type="button" aria-label="По размеру страницы">{icons.fitPage}</button>
              <button type="button" aria-label="По ширине страницы">{icons.fitWidth}</button>
            </StatusGroup>
            <StatusGroup $gap={3} $x={0}>
              <button type="button" aria-label="Уменьшить масштаб">{icons.minus}</button>
              <span>Масштаб 100%</span>
              <button type="button" aria-label="Увеличить масштаб">{icons.plus}</button>
            </StatusGroup>
          </StatusBar>
        </Window>
      </Wallpaper>

      <Panel as="footer" $bottom>
        <Svg w={16} h={16} stroke="#55604a">
          <path d="M.500 3.500V13.500Q.500 15.500 2.500 15.500H13.500Q15.500 15.500 15.500 13.500V4.500Q15.500 3.500 14 3.500H7L5.500 1.500H1.500Z" fill="#b9c0a4" />
          <path d="M3.500 6.500L6 9M12.500 6.500L10 9M3.500 13L6 11M12.500 13L10 11M6.500 12.500V8.500H9.500V12.500" />
        </Svg>
        <Grip $wide />
        <TaskButton type="button">
          <ThreeDiamonds colors={brand} />
          DesktopEditors
        </TaskButton>
        <Workspaces>
          <Workspace $on aria-label="Рабочее место 1"><ThreeDiamonds colors={brand} /></Workspace>
          <Workspace aria-label="Рабочее место 2" />
          <Workspace aria-label="Рабочее место 3" />
          <Workspace aria-label="Рабочее место 4" />
        </Workspaces>
      </Panel>
    </Desktop>
  );
}
